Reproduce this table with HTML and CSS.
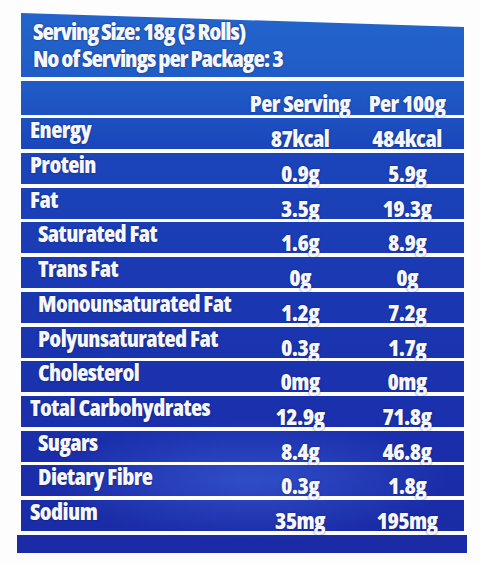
FILE: index.html
```html
<!DOCTYPE html>
<html lang="en">
<head>
    <meta charset="UTF-8">
    <title>Nutrition Information</title>
    <link rel="stylesheet" href="styles.css">
</head>
<body>
    <div class="label">
        <div class="serving">
            <div>Serving Size: 18g (3 Rolls)</div>
            <div>No of Servings per Package: 3</div>
        </div>

        <div class="row head">
            <span></span>
            <span class="val">Per Serving</span>
            <span class="val">Per 100g</span>
        </div>

        <div class="row">
            <span class="name">Energy</span>
            <span class="val">87kcal</span>
            <span class="val">484kcal</span>
        </div>
        <div class="row">
            <span class="name">Protein</span>
            <span class="val">0.9g</span>
            <span class="val">5.9g</span>
        </div>
        <div class="row">
            <span class="name">Fat</span>
            <span class="val">3.5g</span>
            <span class="val">19.3g</span>
        </div>
        <div class="row">
            <span class="name sub">Saturated Fat</span>
            <span class="val">1.6g</span>
            <span class="val">8.9g</span>
        </div>
        <div class="row">
            <span class="name sub">Trans Fat</span>
            <span class="val">0g</span>
            <span class="val">0g</span>
        </div>
        <div class="row">
            <span class="name sub">Monounsaturated Fat</span>
            <span class="val">1.2g</span>
            <span class="val">7.2g</span>
        </div>
        <div class="row">
            <span class="name sub">Polyunsaturated Fat</span>
            <span class="val">0.3g</span>
            <span class="val">1.7g</span>
        </div>
        <div class="row">
            <span class="name sub">Cholesterol</span>
            <span class="val">0mg</span>
            <span class="val">0mg</span>
        </div>
        <div class="row">
            <span class="name">Total Carbohydrates</span>
            <span class="val">12.9g</span>
            <span class="val">71.8g</span>
        </div>
        <div class="row">
            <span class="name sub">Sugars</span>
            <span class="val">8.4g</span>
            <span class="val">46.8g</span>
        </div>
        <div class="row">
            <span class="name sub">Dietary Fibre</span>
            <span class="val">0.3g</span>
            <span class="val">1.8g</span>
        </div>
        <div class="row">
            <span class="name">Sodium</span>
            <span class="val">35mg</span>
            <span class="val">195mg</span>
        </div>

        <div class="foot"></div>
    </div>
</body>
</html>
```

FILE: styles.css
```css
body {
    margin: 0;
    background-color: #fdfdfd;
    font-family: "Open Sans", "Noto Sans", sans-serif;
    font-stretch: 75%;
    font-weight: 800;
    color: #f6f7fc;
}

.label {
    width: 443px;
    margin: 13px 0 0 21px;
    display: flex;
    flex-direction: column;
    gap: 3.7px;
    text-shadow: 0 0 2px rgba(10, 20, 80, 0.7);
}

.serving,
.row,
.foot {
    background: radial-gradient(ellipse 200px 60px at 250px 480px, rgba(70, 110, 230, 0.5), transparent),
        linear-gradient(#2466cd 0px, #1f5ac6 90px, #1b45bb 150px, #1a37b2 300px, #1a2eab 450px, #1a2aa4 563px);
    background-attachment: fixed;
}

.serving {
    height: 64px;
    box-sizing: border-box;
    padding: 5px 0 0 12px;
    font-size: 23.5px;
    line-height: 27px;
    letter-spacing: -1.1px;
    clip-path: polygon(0 0, 100% 14px, 100% 100%, 0 100%);
}

.row {
    height: 31px;
    display: grid;
    grid-template-columns: 222px 114px 100px;
    align-items: start;
    font-size: 23px;
    line-height: 22px;
    letter-spacing: -0.6px;
}

.row.head {
    height: 34px;
}

.row.head .val {
    padding-top: 11px;
}

.name {
    padding: 0 0 0 9px;
    white-space: nowrap;
}

.name.sub {
    padding-left: 17px;
}

.val {
    padding-top: 9px;
    text-align: center;
    white-space: nowrap;
}

.foot {
    height: 18px;
    margin: 0 -3px 0 -4px;
}
```
